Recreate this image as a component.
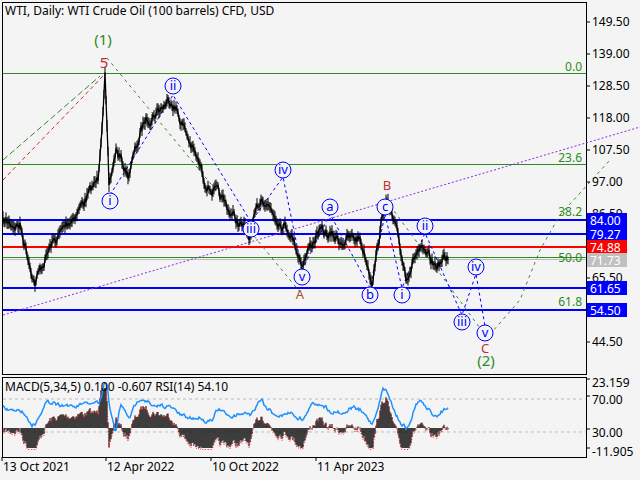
import React from "react";

function rng(seed: number) {
  let s = seed;
  return () => {
    s = (s * 16807) % 2147483647;
    return s / 2147483647;
  };
}

const keys: [number, number][] = [
  [3, 222], [20, 225], [35, 282], [50, 248], [70, 220], [85, 200], [98, 180], [105, 74], [109, 190], [116, 150], [128, 175], [145, 120], [160, 108], [172, 98], [185, 130], [205, 180], [225, 205], [250, 238], [262, 195], [276, 215], [290, 230], [302, 262], [318, 232], [340, 240], [360, 238], [372, 278], [386, 198], [398, 240], [406, 275], [418, 250], [434, 266], [448, 258],
];

function interp(x: number) {
  for (let i = 0; i < keys.length - 1; i++) {
    const [x0, y0] = keys[i];
    const [x1, y1] = keys[i + 1];
    if (x >= x0 && x <= x1) return y0 + ((y1 - y0) * (x - x0)) / (x1 - x0);
  }
  return keys[keys.length - 1][1];
}

const r = rng(7);
const price: number[] = [];
let noise = 0;
for (let x = 3; x <= 448; x++) {
  noise = noise * 0.7 + (r() - 0.5) * 9;
  price.push(interp(x) + noise);
}
const pricePath = price.map((y, i) => `${i ? "L" : "M"}${3 + i} ${y.toFixed(1)}`).join(" ");
const bars = price.map((y, i) => `M${3 + i} ${(y - 3 - r() * 4).toFixed(1)}V${(y + 3 + r() * 4).toFixed(1)}`).join(" ");

const macd: number[] = [];
const rsi: number[] = [];
let ema = price[0];
let rs = 405;
for (let i = 0; i < price.length; i++) {
  ema = ema * 0.93 + price[i] * 0.07;
  macd.push((ema - price[i]) * 0.8);
  const d = i > 10 ? price[i - 10] - price[i] : 0;
  const target = 410 - d * 0.35;
  rs = rs * 0.6 + target * 0.4 + (r() - 0.5) * 3;
  rsi.push(Math.max(383, Math.min(432, rs)));
}
const base = 428;
const clampM = (v: number) => Math.max(-20, Math.min(40, v));
const histPath = macd.map((v, i) => `M${3 + i} ${base}V${(base - clampM(v)).toFixed(1)}`).join(" ");
const sigPath = macd.map((v, i) => `${i ? "L" : "M"}${3 + i} ${(base - clampM(v) + 1.5).toFixed(1)}`).join(" ");
const rsiPath = rsi.map((y, i) => `${i ? "L" : "M"}${3 + i} ${y.toFixed(1)}`).join(" ");

const circ: [number, number, string][] = [
  [110, 201, "i"], [173, 86, "ii"], [251, 229, "iii"], [283, 170, "iv"], [302, 277, "v"],
  [330, 207, "a"], [370, 295, "b"], [385, 207, "c"],
  [402, 295, "i"], [425, 226, "ii"], [462, 322, "iii"], [476, 267, "iv"], [485, 333, "v"],
];

const axis = ["149.50", "139.00", "128.50", "118.00", "107.50", "97.00", "86.50", "76.00", "65.50", "55.00", "44.50"];

const boxes: [number, string, string][] = [
  [220, "84.00", "#0000ff"],
  [234, "79.27", "#0000ff"],
  [247, "74.88", "#ff0000"],
  [260, "71.73", "#c0c0c0"],
  [288, "61.65", "#0000ff"],
  [310, "54.50", "#0000ff"],
];

export default function App() {
  return (
    <div className="w-[640px] h-[480px] bg-[#f4f4f4] overflow-hidden font-['Liberation_Sans',Arial,sans-serif]">
      <svg width="640" height="480" className="block text-[12px]">
        <rect x="2.5" y="2.5" width="584" height="372" fill="#f4f4f4" stroke="#000" />
        <rect x="2.5" y="377.5" width="584" height="80" fill="#f4f4f4" stroke="#000" />
        <text x="5" y="15" fill="#000">WTI, Daily:  WTI Crude Oil (100 barrels) CFD, USD</text>
        <line x1="3" x2="586" y1="73.5" y2="73.5" stroke="#2e8b22" />
        <line x1="3" x2="586" y1="164.5" y2="164.5" stroke="#2e8b22" />
        <line x1="3" x2="586" y1="257.5" y2="257.5" stroke="#2e8b22" />
        <line x1="3" x2="586" y1="259.5" y2="259.5" stroke="#bbb" />
        <text x="582" y="71" fill="#2e8b22" textAnchor="end">0.0</text>
        <text x="582" y="162" fill="#2e8b22" textAnchor="end">23.6</text>
        <text x="582" y="216" fill="#2e8b22" textAnchor="end">38.2</text>
        <text x="582" y="262" fill="#2e8b22" textAnchor="end">50.0</text>
        <text x="582" y="306" fill="#2e8b22" textAnchor="end">61.8</text>
        <line x1="3" x2="586" y1="220" y2="220" stroke="#0000ff" strokeWidth="2" />
        <line x1="3" x2="586" y1="234" y2="234" stroke="#0000ff" strokeWidth="2" />
        <line x1="3" x2="586" y1="247" y2="247" stroke="#ff0000" strokeWidth="2" />
        <line x1="3" x2="586" y1="288" y2="288" stroke="#0000ff" strokeWidth="2" />
        <line x1="3" x2="586" y1="310" y2="310" stroke="#0000ff" strokeWidth="2" />
        <line x1="3" y1="315" x2="640" y2="127" stroke="#8a2be2" strokeDasharray="2 2" />
        <line x1="3" y1="180" x2="104" y2="75" stroke="#c03030" strokeDasharray="4 3" />
        <line x1="3" y1="160" x2="100" y2="76" stroke="#2e8b22" strokeDasharray="6 3" />
        <path d="M107 58 L300 292" stroke="#2e8b22" strokeDasharray="3 4" fill="none" />
        <path d="M386 200 L485 335" stroke="#2e8b22" strokeDasharray="3 4" fill="none" />
        <path d="M485 340 L520 300 L540 250 L560 215 L610 160" stroke="#2e8b22" strokeDasharray="3 4" fill="none" />
        <path d="M110 195 L173 95 L251 222 L283 177 L302 270" stroke="#0000ff" strokeDasharray="3 3" fill="none" />
        <path d="M302 270 L330 214 L370 288 L385 214 L402 288 L425 233 L462 315 L476 274 L485 326" stroke="#0000ff" strokeDasharray="3 3" fill="none" />
        <path d={bars} stroke="#000" strokeWidth="1" />
        <path d={pricePath} stroke="#000" strokeWidth="1.3" fill="none" />
        {circ.map(([x, y, t], i) => (
          <g key={i}>
            <circle cx={x} cy={y} r="8" fill="#f4f4f4" stroke="#0000ff" />
            <text x={x} y={y + 4} fill="#0000ff" textAnchor="middle" className="font-['Liberation_Serif',serif] text-[13px]">{t}</text>
          </g>
        ))}
        <text x="103" y="45" fill="#2e8b22" textAnchor="middle" className="font-['Liberation_Serif',serif] text-[15px]">(1)</text>
        <text x="104" y="68" fill="#c03030" textAnchor="middle" className="font-['Liberation_Serif',serif] text-[15px]">5</text>
        <text x="300" y="299" fill="#a0522d" textAnchor="middle" className="text-[13px]">A</text>
        <text x="387" y="190" fill="#c03030" textAnchor="middle" className="text-[13px]">B</text>
        <text x="485" y="353" fill="#c03030" textAnchor="middle" className="text-[13px]">C</text>
        <text x="486" y="366" fill="#2e8b22" textAnchor="middle" className="font-['Liberation_Serif',serif] text-[15px]">(2)</text>
        {axis.map((a, i) => (
          <g key={a}>
            <line x1="586" x2="590" y1={22 + i * 32} y2={22 + i * 32} stroke="#000" />
            <text x="592" y={26 + i * 32} fill="#000">{a}</text>
          </g>
        ))}
        {boxes.map(([y, t, bg]) => (
          <g key={t}>
            <rect x="587" y={y - 7} width="40" height="14" fill={bg} />
            <text x="590" y={y + 5} fill="#fff">{t}</text>
          </g>
        ))}
        <line x1="3" x2="586" y1="399" y2="399" stroke="#bbb" strokeDasharray="3 3" />
        <line x1="3" x2="586" y1="432" y2="432" stroke="#bbb" strokeDasharray="3 3" />
        <path d={histPath} stroke="#000" />
        <path d={sigPath} stroke="#ff0000" strokeDasharray="1 2" fill="none" />
        <path d={rsiPath} stroke="#1e90ff" strokeWidth="1.5" fill="none" />
        <text x="5" y="391" fill="#000">MACD(5,34,5) 0.100 -0.607 RSI(14) 54.10</text>
        {([[383, "23.159"], [400, "70.00"], [433, "30.00"], [452, "-11.905"]] as [number, string][]).map(([y, t]) => (
          <g key={t}>
            <line x1="586" x2="590" y1={y - 4} y2={y - 4} stroke="#000" />
            <text x="592" y={y + 4} fill="#000">{t}</text>
          </g>
        ))}
        {([[2, "13 Oct 2021"], [106, "12 Apr 2022"], [211, "10 Oct 2022"], [316, "11 Apr 2023"]] as [number, string][]).map(([x, t]) => (
          <g key={t}>
            <line x1={x} x2={x} y1="457" y2="461" stroke="#000" />
            <text x={x + 1} y="471" fill="#000">{t}</text>
          </g>
        ))}
      </svg>
    </div>
  );
}
